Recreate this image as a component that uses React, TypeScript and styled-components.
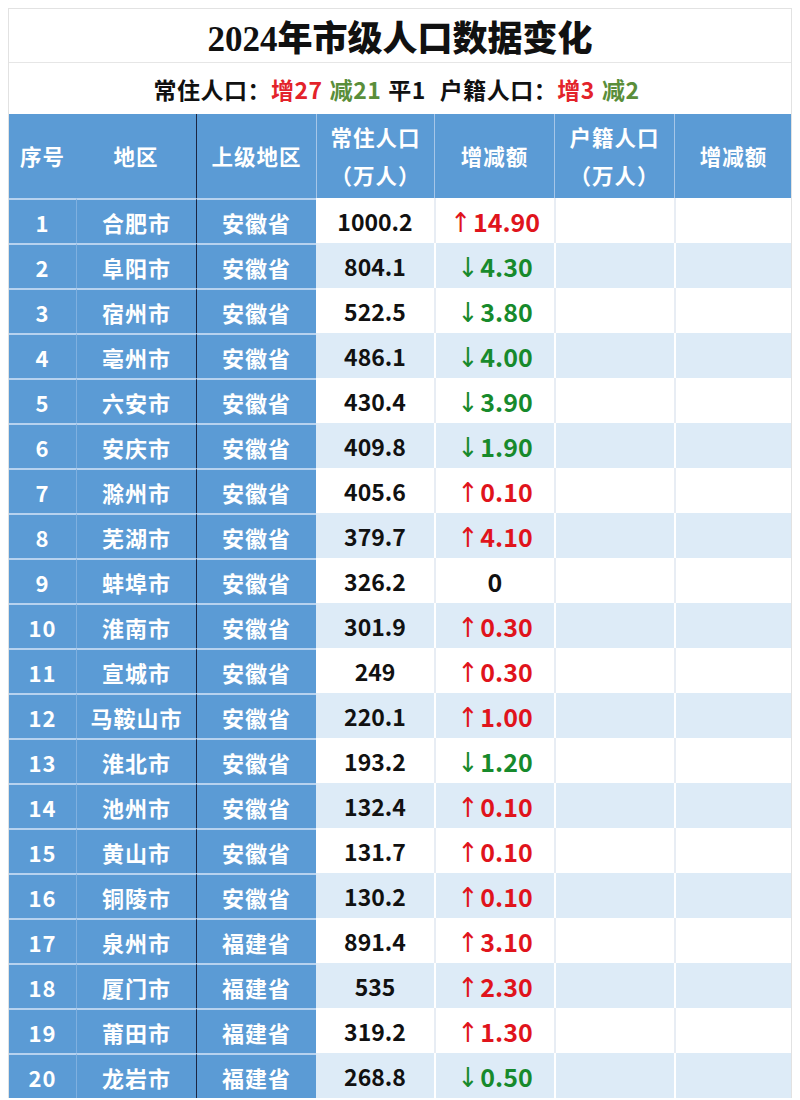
import React from "react";
import styled, { createGlobalStyle } from "styled-components";

const GlobalStyle = createGlobalStyle`
  html, body {
    margin: 0;
    padding: 0;
    background: #fff;
  }
  body {
    font-family: "Noto Sans", "Noto Sans CJK SC", sans-serif;
  }
`;

type Row = {
  no: number;
  city: string;
  prov: string;
  pop: string;
  dir: "up" | "down" | "flat";
  delta: string;
};

const rows: Row[] = [
  { no: 1, city: "合肥市", prov: "安徽省", pop: "1000.2", dir: "up", delta: "14.90" },
  { no: 2, city: "阜阳市", prov: "安徽省", pop: "804.1", dir: "down", delta: "4.30" },
  { no: 3, city: "宿州市", prov: "安徽省", pop: "522.5", dir: "down", delta: "3.80" },
  { no: 4, city: "亳州市", prov: "安徽省", pop: "486.1", dir: "down", delta: "4.00" },
  { no: 5, city: "六安市", prov: "安徽省", pop: "430.4", dir: "down", delta: "3.90" },
  { no: 6, city: "安庆市", prov: "安徽省", pop: "409.8", dir: "down", delta: "1.90" },
  { no: 7, city: "滁州市", prov: "安徽省", pop: "405.6", dir: "up", delta: "0.10" },
  { no: 8, city: "芜湖市", prov: "安徽省", pop: "379.7", dir: "up", delta: "4.10" },
  { no: 9, city: "蚌埠市", prov: "安徽省", pop: "326.2", dir: "flat", delta: "0" },
  { no: 10, city: "淮南市", prov: "安徽省", pop: "301.9", dir: "up", delta: "0.30" },
  { no: 11, city: "宣城市", prov: "安徽省", pop: "249", dir: "up", delta: "0.30" },
  { no: 12, city: "马鞍山市", prov: "安徽省", pop: "220.1", dir: "up", delta: "1.00" },
  { no: 13, city: "淮北市", prov: "安徽省", pop: "193.2", dir: "down", delta: "1.20" },
  { no: 14, city: "池州市", prov: "安徽省", pop: "132.4", dir: "up", delta: "0.10" },
  { no: 15, city: "黄山市", prov: "安徽省", pop: "131.7", dir: "up", delta: "0.10" },
  { no: 16, city: "铜陵市", prov: "安徽省", pop: "130.2", dir: "up", delta: "0.10" },
  { no: 17, city: "泉州市", prov: "福建省", pop: "891.4", dir: "up", delta: "3.10" },
  { no: 18, city: "厦门市", prov: "福建省", pop: "535", dir: "up", delta: "2.30" },
  { no: 19, city: "莆田市", prov: "福建省", pop: "319.2", dir: "up", delta: "1.30" },
  { no: 20, city: "龙岩市", prov: "福建省", pop: "268.8", dir: "down", delta: "0.50" },
];

const BLUE = "#5b9bd5";
const STRIPE = "#ddebf7";
const RED = "#e0141c";
const GREEN = "#178a2c";

const Page = styled.div`
  padding: 8px 8px 0;
`;

const Sheet = styled.div`
  width: 784px;
  border: 1px solid #e2e2e2;
  border-bottom: none;
  box-sizing: border-box;
`;

const Title = styled.div`
  height: 53px;
  display: flex;
  align-items: center;
  justify-content: center;
  font-family: "Liberation Serif", "Noto Sans CJK SC", serif;
  font-weight: 900;
  font-size: 35px;
  color: #111;
  border-bottom: 1px solid #e6e6e6;
`;

const Summary = styled.div`
  height: 51px;
  display: flex;
  align-items: center;
  justify-content: center;
  font-family: "Noto Sans CJK SC", sans-serif;
  font-weight: 700;
  font-size: 23px;
  color: #111;
  white-space: pre;
  letter-spacing: 0.5px;
`;

const Tone = styled.span<{ $c: "red" | "green" }>`
  color: ${(p) => (p.$c === "red" ? "#e3232a" : "#5a8e3a")};
  margin-right: 7px;
`;

const Gap = styled.span`
  display: inline-block;
  width: 14px;
`;

const Grid = styled.div`
  display: grid;
  grid-template-columns: 67px 120px 120px 118px 120px 120px 118px;
`;

const HeadRow = styled(Grid)`
  height: 84px;
  background: ${BLUE};
`;

const HeadCell = styled.div<{ $line?: "dark" | "light" | "none" }>`
  display: flex;
  flex-direction: column;
  align-items: center;
  justify-content: center;
  color: #fff;
  font-family: "Noto Sans CJK SC", sans-serif;
  font-weight: 700;
  font-size: 21.5px;
  line-height: 38px;
  letter-spacing: 1px;
  border-left: ${(p) =>
    p.$line === "dark"
      ? "1px solid #1b2642"
      : p.$line === "light"
      ? "1.5px solid #a6c6e8"
      : "none"};
`;

const BodyRow = styled(Grid)<{ $stripe: boolean }>`
  height: 45px;
  background: ${(p) => (p.$stripe ? STRIPE : "#fff")};
`;

const SideCell = styled.div<{ $line?: "dark" | "soft" | "none" }>`
  display: flex;
  align-items: center;
  justify-content: center;
  background: ${BLUE};
  color: #fff;
  font-family: "Noto Sans CJK SC", sans-serif;
  font-weight: 700;
  font-size: 22px;
  letter-spacing: 1px;
  border-top: 2px solid #b7d2ef;
  border-left: ${(p) =>
    p.$line === "dark"
      ? "1px solid #1b2642"
      : p.$line === "soft"
      ? "1px solid #7fb0e0"
      : "none"};
`;

const DataCell = styled.div<{ $stripe: boolean; $first?: boolean }>`
  display: flex;
  align-items: center;
  justify-content: center;
  font-family: "Noto Sans CJK SC", sans-serif;
  font-weight: 700;
  font-size: 23px;
  color: #111;
  border-left: ${(p) =>
    p.$first ? "none" : `2px solid ${p.$stripe ? "#fff" : "#e8edf4"}`};
`;

const Delta = styled.span<{ $dir: Row["dir"] }>`
  color: ${(p) => (p.$dir === "up" ? RED : p.$dir === "down" ? GREEN : "#111")};
  display: inline-flex;
  align-items: center;
  font-size: 25px;
`;

const Arrow = styled.span`
  font-family: "DejaVu Sans", sans-serif;
  font-weight: 400;
  font-size: 25px;
  margin-right: 2px;
  transform: translateY(2px) scaleY(1.1);
`;

export default function App() {
  return (
    <Page>
      <GlobalStyle />
      <Sheet>
        <Title>2024年市级人口数据变化</Title>
        <Summary>
          常住人口：<Tone $c="red">增27</Tone>
          <Tone $c="green">减21</Tone>平1<Gap />户籍人口：
          <Tone $c="red">增3</Tone>
          <Tone $c="green">减2</Tone>
        </Summary>
        <HeadRow>
          <HeadCell>序号</HeadCell>
          <HeadCell>地区</HeadCell>
          <HeadCell $line="dark">上级地区</HeadCell>
          <HeadCell $line="light">
            <span>常住人口</span>
            <span>（万人）</span>
          </HeadCell>
          <HeadCell $line="light">增减额</HeadCell>
          <HeadCell $line="light">
            <span>户籍人口</span>
            <span>（万人）</span>
          </HeadCell>
          <HeadCell $line="light">增减额</HeadCell>
        </HeadRow>
        {rows.map((r, i) => {
          const stripe = i % 2 === 1;
          return (
            <BodyRow key={r.no} $stripe={stripe}>
              <SideCell>{r.no}</SideCell>
              <SideCell $line="soft">{r.city}</SideCell>
              <SideCell $line="dark">{r.prov}</SideCell>
              <DataCell $stripe={stripe} $first>
                {r.pop}
              </DataCell>
              <DataCell $stripe={stripe}>
                <Delta $dir={r.dir}>
                  {r.dir === "up" && <Arrow>↑</Arrow>}
                  {r.dir === "down" && <Arrow>↓</Arrow>}
                  {r.delta}
                </Delta>
              </DataCell>
              <DataCell $stripe={stripe} />
              <DataCell $stripe={stripe} />
            </BodyRow>
          );
        })}
      </Sheet>
    </Page>
  );
}
